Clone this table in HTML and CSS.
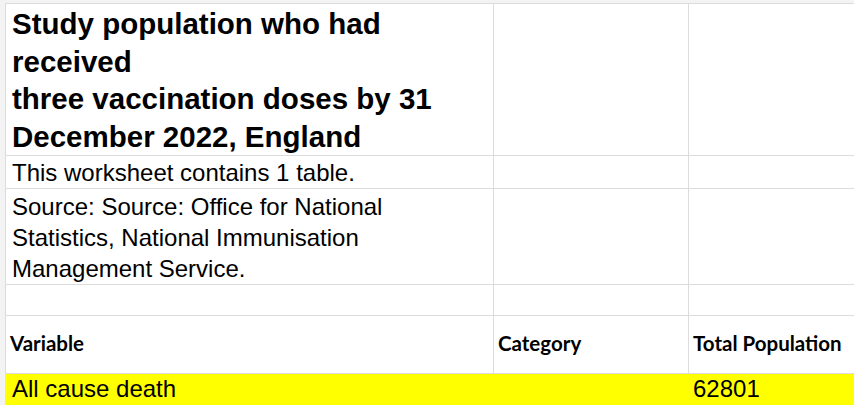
FILE: index.html
```html
<!DOCTYPE html>
<html>
<head>
<meta charset="utf-8">
<link rel="stylesheet" href="styles.css">
</head>
<body>
<div class="sheet">
  <table class="grid">
    <colgroup>
      <col class="col-a">
      <col class="col-b">
      <col class="col-c">
    </colgroup>
    <tr class="r-title">
      <td class="title">Study population who had<br>received<br>three vaccination doses by 31<br>December 2022, England</td>
      <td></td><td></td>
    </tr>
    <tr class="r-note">
      <td class="note">This worksheet contains 1 table.</td>
      <td></td><td></td>
    </tr>
    <tr class="r-source">
      <td class="note source">Source: Source: Office for National<br>Statistics, National Immunisation<br>Management Service.</td>
      <td></td><td></td>
    </tr>
    <tr class="r-blank"><td></td><td></td><td></td></tr>
    <tr class="r-head">
      <td class="head">Variable</td>
      <td class="head">Category</td>
      <td class="head">Total Population</td>
    </tr>
    <tr class="r-data">
      <td class="data">All cause death</td>
      <td class="data"></td>
      <td class="data num">62801</td>
    </tr>
  </table>
</div>
</body>
</html>
```

FILE: styles.css
```css
html, body {
  margin: 0;
  padding: 0;
  background: #ffffff;
  overflow: hidden;
}
.sheet {
  width: 854px;
  height: 405px;
  padding: 3px 0 0 5px;
  box-sizing: border-box;
  background: #f3f3f3;
  overflow: hidden;
}
.grid {
  border-collapse: collapse;
  table-layout: fixed;
  width: 849px;
  background: #ffffff;
  font-family: "Liberation Sans", Arial, sans-serif;
  color: #000000;
}
.col-a { width: 488px; }
.col-b { width: 195px; }
.col-c { width: 166px; }
.grid td {
  border: 1px solid #dcdcdc;
  padding: 0 6px;
  vertical-align: bottom;
  white-space: nowrap;
  overflow: hidden;
}
.r-title { height: 151px; }
.r-note { height: 33px; }
.r-source { height: 96px; }
.r-blank { height: 31px; }
.r-head { height: 58px; }
.r-data { height: 40px; }
.grid td.title {
  vertical-align: top;
  font-weight: bold;
  font-size: 29.5px;
  line-height: 37.5px;
  padding-top: 1px;
}
.grid td.note {
  font-size: 24px;
  line-height: 30px;
  vertical-align: top;
  padding-top: 2px;
}
.grid td.source {
  line-height: 31px;
  padding-top: 2px;
}
.grid td.head {
  font-family: Lato, "Open Sans", sans-serif;
  font-weight: bold;
  font-size: 20.5px;
  line-height: 25px;
  padding: 0 4px 17px 4px;
}
.r-data td {
  background: #ffff00;
  border-color: #ffff00;
  vertical-align: top;
  font-size: 24px;
  line-height: 29px;
  padding-top: 0;
}
.grid td.num {
  padding-left: 4px;
}
```
